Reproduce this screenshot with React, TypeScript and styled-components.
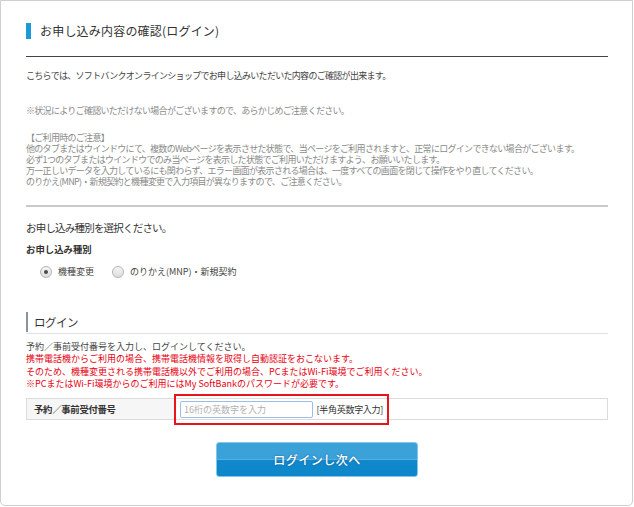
import React from 'react'
import styled, { createGlobalStyle } from 'styled-components'

const GlobalStyle = createGlobalStyle`
  body {
    margin: 0;
    background: #fff;
    font-family: "Noto Sans CJK JP", "Liberation Sans", sans-serif;
    color: #333;
  }
`

const Frame = styled.div`
  box-sizing: border-box;
  width: 633px;
  height: 506px;
  border: 1px solid #cfcfcf;
  border-radius: 0 0 5px 5px;
  padding: 22px 24px 0 25px;
`

const PageTitle = styled.h1`
  margin: 0;
  height: 16px;
  line-height: 16px;
  border-left: 5px solid #1a9ad6;
  padding-left: 9px;
  font-size: 12px;
  font-weight: normal;
  letter-spacing: 0.2px;
  color: #333;
`

const TitleRule = styled.hr`
  margin: 17px 0 0;
  border: 0;
  border-top: 1px solid #444;
`

const Text = styled.p<{ $tone?: 'dark' | 'gray' | 'red'; $gap?: number }>`
  margin: ${p => p.$gap ?? 0}px 0 0;
  font-size: 9px;
  line-height: 11px;
  letter-spacing: -0.7px;
  color: ${p => (p.$tone === 'red' ? '#e60012' : p.$tone === 'gray' ? '#8a8a8a' : '#444')};
`

const SectionRule = styled.hr`
  margin: 18px 0 0;
  border: 0;
  border-top: 2px solid #c9c9c9;
`

const SectionLead = styled.h2`
  margin: 14px 0 0;
  font-size: 10.5px;
  line-height: 14px;
  font-weight: normal;
  letter-spacing: -0.8px;
  color: #333;
`

const FieldLabel = styled.div`
  margin-top: 8px;
  font-size: 9.4px;
  line-height: 12px;
  font-weight: bold;
  color: #333;
`

const RadioRow = styled.div`
  display: flex;
  align-items: center;
  gap: 18px;
  margin-top: 11px;
  padding-left: 14px;
  height: 12px;
`

const RadioOption = styled.label`
  display: flex;
  align-items: center;
  gap: 6px;
  font-size: 9px;
  line-height: 12px;
  color: #444;
`

const RadioCircle = styled.span<{ $checked?: boolean }>`
  position: relative;
  box-sizing: border-box;
  width: 12px;
  height: 12px;
  border-radius: 50%;
  border: 1px solid #b4b4b4;
  background: linear-gradient(#f6f6f6, #dcdcdc);
  &::after {
    content: '';
    display: ${p => (p.$checked ? 'block' : 'none')};
    position: absolute;
    left: 3px;
    top: 3px;
    width: 4px;
    height: 4px;
    border-radius: 50%;
    background: #4a4a4a;
  }
`

const LoginHead = styled.div`
  margin-top: 34px;
  border-bottom: 1px solid #e1e1e1;
  padding-bottom: 1px;
`

const LoginTitle = styled.h2`
  margin: 0;
  height: 20px;
  line-height: 20px;
  border-left: 2px solid #8b939c;
  padding-left: 6px;
  font-size: 11.5px;
  font-weight: normal;
  letter-spacing: -0.5px;
  color: #333;
`

const Notes = styled.div`
  margin-top: 7px;
  & > p {
    line-height: 12.3px;
    letter-spacing: 0;
  }
`

const FormRow = styled.div`
  display: flex;
  align-items: center;
  height: 22px;
  margin-top: 8px;
  box-sizing: border-box;
  border: 1px solid #dcdcdc;
`

const RowLabel = styled.div`
  align-self: stretch;
  display: flex;
  align-items: center;
  width: 140px;
  padding-left: 7px;
  background: #f6f6f6;
  font-size: 9.4px;
  font-weight: bold;
  letter-spacing: -0.3px;
  color: #333;
`

const HighlightBox = styled.div`
  box-sizing: border-box;
  display: flex;
  align-items: center;
  gap: 4px;
  width: 215px;
  height: 31px;
  flex-shrink: 0;
  padding: 0 4px;
  border: 2px solid #e8141c;
`

const CodeInput = styled.input`
  box-sizing: border-box;
  width: 138px;
  height: 17px;
  padding: 0 3px;
  border: 1px solid #9dbde9;
  border-radius: 2px;
  font-family: inherit;
  font-size: 9px;
  outline: none;
  &::placeholder {
    color: #b0b0b0;
  }
`

const Hint = styled.span`
  font-size: 9px;
  letter-spacing: -0.3px;
  color: #333;
  white-space: nowrap;
`

const ButtonBar = styled.div`
  display: flex;
  justify-content: center;
  margin-top: 22px;
`

const NextButton = styled.button`
  box-sizing: border-box;
  width: 202px;
  height: 35px;
  border: 1px solid #86c5ea;
  border-radius: 3px;
  background: linear-gradient(#3ba1d9 0%, #3ba1d9 48%, #55b0e0 50%, #1189cc 52%, #0c86ca 100%);
  color: #fff;
  font-family: inherit;
  font-size: 12px;
  font-weight: 500;
  letter-spacing: 0.5px;
  text-shadow: 0 0 2px rgba(0, 50, 100, 0.6);
  cursor: pointer;
`

export default function App() {
  return (
    <>
      <GlobalStyle />
      <Frame>
        <PageTitle>お申し込み内容の確認(ログイン)</PageTitle>
        <TitleRule />
        <Text $gap={13}>こちらでは、ソフトバンクオンラインショップでお申し込みいただいた内容のご確認が出来ます。</Text>
        <Text $tone="gray" $gap={24}>※状況によりご確認いただけない場合がございますので、あらかじめご注意ください。</Text>
        <Text $tone="gray" $gap={16}>【ご利用時のご注意】</Text>
        <Text $tone="gray">他のタブまたはウインドウにて、複数のWebページを表示させた状態で、当ページをご利用されますと、正常にログインできない場合がございます。</Text>
        <Text $tone="gray">必ず1つのタブまたはウインドウでのみ当ページを表示した状態でご利用いただけますよう、お願いいたします。</Text>
        <Text $tone="gray">万一正しいデータを入力しているにも関わらず、エラー画面が表示される場合は、一度すべての画面を閉じて操作をやり直してください。</Text>
        <Text $tone="gray">のりかえ(MNP)・新規契約と機種変更で入力項目が異なりますので、ご注意ください。</Text>

        <SectionRule />
        <SectionLead>お申し込み種別を選択ください。</SectionLead>
        <FieldLabel>お申し込み種別</FieldLabel>
        <RadioRow>
          <RadioOption>
            <RadioCircle $checked />
            機種変更
          </RadioOption>
          <RadioOption>
            <RadioCircle />
            のりかえ(MNP)・新規契約
          </RadioOption>
        </RadioRow>

        <LoginHead>
          <LoginTitle>ログイン</LoginTitle>
        </LoginHead>
        <Notes>
          <Text>予約／事前受付番号を入力し、ログインしてください。</Text>
          <Text $tone="red">携帯電話機からご利用の場合、携帯電話機情報を取得し自動認証をおこないます。</Text>
          <Text $tone="red">そのため、機種変更される携帯電話機以外でご利用の場合、PCまたはWi-Fi環境でご利用ください。</Text>
          <Text $tone="red">※PCまたはWi-Fi環境からのご利用にはMy SoftBankのパスワードが必要です。</Text>
        </Notes>

        <FormRow>
          <RowLabel>予約／事前受付番号</RowLabel>
          <HighlightBox>
            <CodeInput placeholder="16桁の英数字を入力" />
            <Hint>[半角英数字入力]</Hint>
          </HighlightBox>
        </FormRow>

        <ButtonBar>
          <NextButton type="button">ログインし次へ</NextButton>
        </ButtonBar>
      </Frame>
    </>
  )
}
